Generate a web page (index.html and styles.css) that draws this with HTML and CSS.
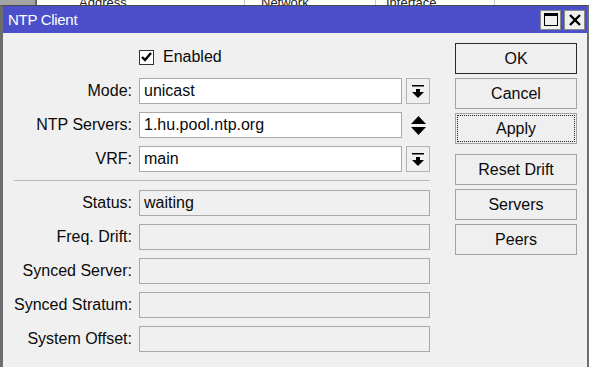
FILE: index.html
```html
<!DOCTYPE html>
<html lang="en">
<head>
    <meta charset="UTF-8">
    <meta name="viewport" content="width=device-width, initial-scale=1.0">
    <title>NTP Client</title>
    <link rel="stylesheet" href="styles.css">
</head>
<body>
    <!-- List window behind the dialog, only its bottom edge shows -->
    <div class="backdrop">
        <div class="side"></div>
        <div class="col col-address">Address</div>
        <div class="col col-network">Network</div>
        <div class="col col-iface">Interface</div>
    </div>

    <div class="window">
        <div class="titlebar">
            <span class="title">NTP Client</span>
            <div class="title-buttons">
                <span class="tb-btn">
                    <svg width="14" height="13" viewBox="0 0 14 13">
                        <rect x="0.5" y="0.5" width="13" height="12" fill="none" stroke="#000"/>
                        <rect x="0" y="0" width="14" height="3" fill="#000"/>
                    </svg>
                </span>
                <span class="tb-btn">
                    <svg width="12" height="12" viewBox="0 0 12 12">
                        <path d="M1 1 L11 11 M11 1 L1 11" stroke="#000" stroke-width="2.4"/>
                    </svg>
                </span>
            </div>
        </div>

        <div class="dialog">
            <div class="form">
                <div class="row">
                    <span class="label"></span>
                    <span class="check">
                        <svg width="11" height="10" viewBox="0 0 11 10">
                            <path d="M1 5 L4 8 L10 1" fill="none" stroke="#000" stroke-width="2.4"/>
                        </svg>
                    </span>
                    <span class="check-text">Enabled</span>
                </div>

                <div class="row">
                    <span class="label">Mode:</span>
                    <span class="field">unicast</span>
                    <span class="drop">
                        <svg width="12" height="13" viewBox="0 0 12 13">
                            <rect x="0" y="0" width="12" height="1.5" fill="#000"/>
                            <rect x="4" y="4" width="4" height="3" fill="#000"/>
                            <path d="M0 7 L12 7 L6 13 Z" fill="#000"/>
                        </svg>
                    </span>
                </div>

                <div class="row">
                    <span class="label">NTP Servers:</span>
                    <span class="field">1.hu.pool.ntp.org</span>
                    <span class="spin">
                        <svg width="15" height="19" viewBox="0 0 15 19">
                            <path d="M0 8 L15 8 L7.5 0 Z" fill="#000"/>
                            <path d="M0 11 L15 11 L7.5 19 Z" fill="#000"/>
                        </svg>
                    </span>
                </div>

                <div class="row">
                    <span class="label">VRF:</span>
                    <span class="field">main</span>
                    <span class="drop">
                        <svg width="12" height="13" viewBox="0 0 12 13">
                            <rect x="0" y="0" width="12" height="1.5" fill="#000"/>
                            <rect x="4" y="4" width="4" height="3" fill="#000"/>
                            <path d="M0 7 L12 7 L6 13 Z" fill="#000"/>
                        </svg>
                    </span>
                </div>

                <div class="separator"></div>

                <div class="row">
                    <span class="label">Status:</span>
                    <span class="field readonly">waiting</span>
                </div>
                <div class="row">
                    <span class="label">Freq. Drift:</span>
                    <span class="field readonly"></span>
                </div>
                <div class="row">
                    <span class="label">Synced Server:</span>
                    <span class="field readonly"></span>
                </div>
                <div class="row">
                    <span class="label">Synced Stratum:</span>
                    <span class="field readonly"></span>
                </div>
                <div class="row">
                    <span class="label">System Offset:</span>
                    <span class="field readonly"></span>
                </div>
            </div>

            <div class="actions">
                <button class="btn btn-default">OK</button>
                <button class="btn">Cancel</button>
                <button class="btn btn-focus">Apply</button>
                <button class="btn btn-gap">Reset Drift</button>
                <button class="btn">Servers</button>
                <button class="btn">Peers</button>
            </div>
        </div>
    </div>
</body>
</html>
```

FILE: styles.css
```css
/* Basic Styles */
body {
    margin: 0;
    font-family: "Liberation Sans", Arial, sans-serif;
    font-size: 16px;
    color: #0a0a0a;
    background-color: #fff;
    overflow: hidden;
}

/* Background list window */
.backdrop {
    display: flex;
    align-items: flex-end;
    height: 5px;
    overflow: hidden;
    background-color: #fff;
}

.backdrop .side {
    width: 35px;
    height: 5px;
    background-color: #a3a3a3;
    border-right: 2px solid #666;
}

.backdrop .col {
    font-size: 13px;
    line-height: 5px;
    color: #222;
    height: 5px;
    box-sizing: border-box;
    border-right: 1px solid #c8c8c8;
}

.col-address {
    width: 208px;
    padding-left: 42px;
}

.col-network {
    width: 131px;
    padding-left: 16px;
}

.col-iface {
    width: 119px;
    padding-left: 10px;
}

/* Dialog window */
.window {
    height: 362px;
    border-left: 3px solid #6d6d6d;
    border-right: 2px solid #6d6d6d;
    border-top: 1px solid #4a4a4a;
    background-color: #f0f0f0;
}

.titlebar {
    display: flex;
    align-items: center;
    justify-content: space-between;
    height: 27px;
    padding: 0 2px 0 5px;
    background-color: #4b4fc9;
}

.title {
    color: #fff;
    font-size: 15px;
    letter-spacing: -0.3px;
}

.title-buttons {
    display: flex;
    gap: 3px;
}

.tb-btn {
    display: flex;
    align-items: center;
    justify-content: center;
    width: 21px;
    height: 20px;
    box-sizing: border-box;
    background-color: #f0f0f0;
    border: 1px solid #8a8a8a;
}

.dialog {
    display: flex;
    gap: 25px;
    padding: 10px 0 0 11px;
}

/* Form fields */
.form {
    width: 416px;
    margin-top: 1px;
}

.row {
    display: flex;
    align-items: center;
    height: 26px;
    margin-bottom: 8px;
}

.label {
    width: 118px;
    margin-right: 7px;
    text-align: right;
    white-space: nowrap;
}

.check {
    display: flex;
    align-items: center;
    justify-content: center;
    width: 15px;
    height: 15px;
    box-sizing: border-box;
    border: 1px solid #333;
    background-color: #fff;
}

.check-text {
    margin-left: 9px;
}

.field {
    width: 263px;
    height: 26px;
    box-sizing: border-box;
    padding-left: 4px;
    line-height: 24px;
    border: 1px solid #a9a9a9;
    background-color: #fff;
    white-space: nowrap;
}

.field.readonly {
    width: 291px;
    background-color: #f0f0f0;
}

.drop {
    display: flex;
    align-items: center;
    justify-content: center;
    width: 24px;
    height: 26px;
    margin-left: 4px;
    box-sizing: border-box;
    border: 1px solid #b4b4b4;
    background-color: #f0f0f0;
}

.spin {
    display: flex;
    align-items: center;
    justify-content: center;
    width: 24px;
    height: 26px;
    margin-left: 4px;
}

.separator {
    height: 1px;
    margin: 2px 0 9px 0;
    background-color: #b9b9b9;
}

/* Buttons */
.actions {
    display: flex;
    flex-direction: column;
    gap: 4px;
    width: 122px;
}

.btn {
    height: 31px;
    box-sizing: border-box;
    font-family: "Liberation Sans", Arial, sans-serif;
    font-size: 16px;
    color: #0a0a0a;
    background-color: #efefef;
    border: 1px solid #a3a3a3;
    border-radius: 0;
    padding: 0;
}

.btn-default {
    border-color: #2b2b2b;
}

.btn-focus {
    outline: 1px dotted #222;
    outline-offset: -3px;
}

.btn-gap {
    margin-top: 6px;
}
```
